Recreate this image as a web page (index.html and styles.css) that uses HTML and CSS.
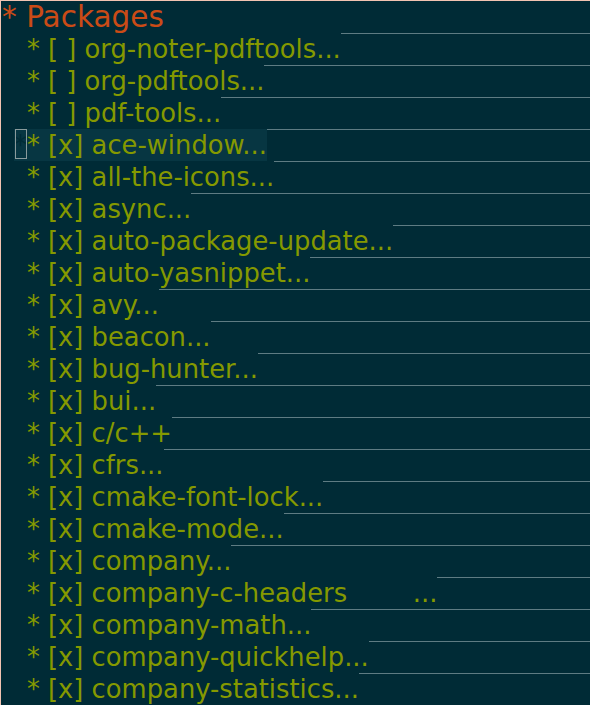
FILE: index.html
```html
<!DOCTYPE html>
<html>
<head>
<meta charset="utf-8">
<link rel="stylesheet" href="styles.css">
</head>
<body>
<div class="buffer">
  <div class="heading">* Packages</div>
  <div class="item"><span class="text"><span class="hide">*</span>* [ ] org-noter-pdftools...</span><span class="rule"></span></div>
  <div class="item"><span class="text"><span class="hide">*</span>* [ ] org-pdftools...</span><span class="rule"></span></div>
  <div class="item"><span class="text"><span class="hide">*</span>* [ ] pdf-tools...</span><span class="rule"></span></div>
  <div class="item current"><span class="text"><span class="hide cursor">*</span>* [x] ace-window...</span><span class="rule"></span></div>
  <div class="item"><span class="text"><span class="hide">*</span>* [x] all-the-icons...</span><span class="rule"></span></div>
  <div class="item"><span class="text"><span class="hide">*</span>* [x] async...</span><span class="rule"></span></div>
  <div class="item"><span class="text"><span class="hide">*</span>* [x] auto-package-update...</span><span class="rule"></span></div>
  <div class="item"><span class="text"><span class="hide">*</span>* [x] auto-yasnippet...</span><span class="rule"></span></div>
  <div class="item"><span class="text"><span class="hide">*</span>* [x] avy...</span><span class="rule"></span></div>
  <div class="item"><span class="text"><span class="hide">*</span>* [x] beacon...</span><span class="rule"></span></div>
  <div class="item"><span class="text"><span class="hide">*</span>* [x] bug-hunter...</span><span class="rule"></span></div>
  <div class="item"><span class="text"><span class="hide">*</span>* [x] bui...</span><span class="rule"></span></div>
  <div class="item"><span class="text"><span class="hide">*</span>* [x] c/c++</span><span class="rule"></span></div>
  <div class="item"><span class="text"><span class="hide">*</span>* [x] cfrs...</span><span class="rule"></span></div>
  <div class="item"><span class="text"><span class="hide">*</span>* [x] cmake-font-lock...</span><span class="rule"></span></div>
  <div class="item"><span class="text"><span class="hide">*</span>* [x] cmake-mode...</span><span class="rule"></span></div>
  <div class="item"><span class="text"><span class="hide">*</span>* [x] company...</span><span class="rule"></span></div>
  <div class="item"><span class="text"><span class="hide">*</span>* [x] company-c-headers        ...</span><span class="rule"></span></div>
  <div class="item"><span class="text"><span class="hide">*</span>* [x] company-math...</span><span class="rule"></span></div>
  <div class="item"><span class="text"><span class="hide">*</span>* [x] company-quickhelp...</span><span class="rule"></span></div>
  <div class="item"><span class="text"><span class="hide">*</span>* [x] company-statistics...</span><span class="rule"></span></div>
</div>
</body>
</html>
```
FILE: styles.css
```css
html, body {
  margin: 0;
  padding: 0;
  background: #002b36;
  height: 100%;
  overflow: hidden;
}
.buffer {
  border-top: 1px solid #f2c4b2;
  border-left: 1px solid #f2c4b2;
  min-height: 100%;
  box-sizing: border-box;
  font-family: "DejaVu Sans", sans-serif;
  display: flex;
  flex-direction: column;
}
.heading {
  height: 32px;
  line-height: 32px;
  font-size: 29.5px;
  padding-left: 1px;
  color: #cb4b16;
  white-space: pre;
}
.item {
  display: flex;
  height: 32px;
  padding-left: 13px;
  font-size: 25.8px;
  line-height: 32px;
  color: #859900;
  white-space: pre;
}
.text {
  flex: none;
}
.hide {
  color: #002b36;
  position: relative;
}
.current .text {
  background: #073642;
}
.cursor::after {
  content: "";
  position: absolute;
  left: 1px;
  top: -1px;
  width: 12px;
  height: 30px;
  box-sizing: border-box;
  border: 1px solid #8a9b9c;
}
.rule {
  flex: 1;
  border-top: 1px solid #5e7c83;
}
```
